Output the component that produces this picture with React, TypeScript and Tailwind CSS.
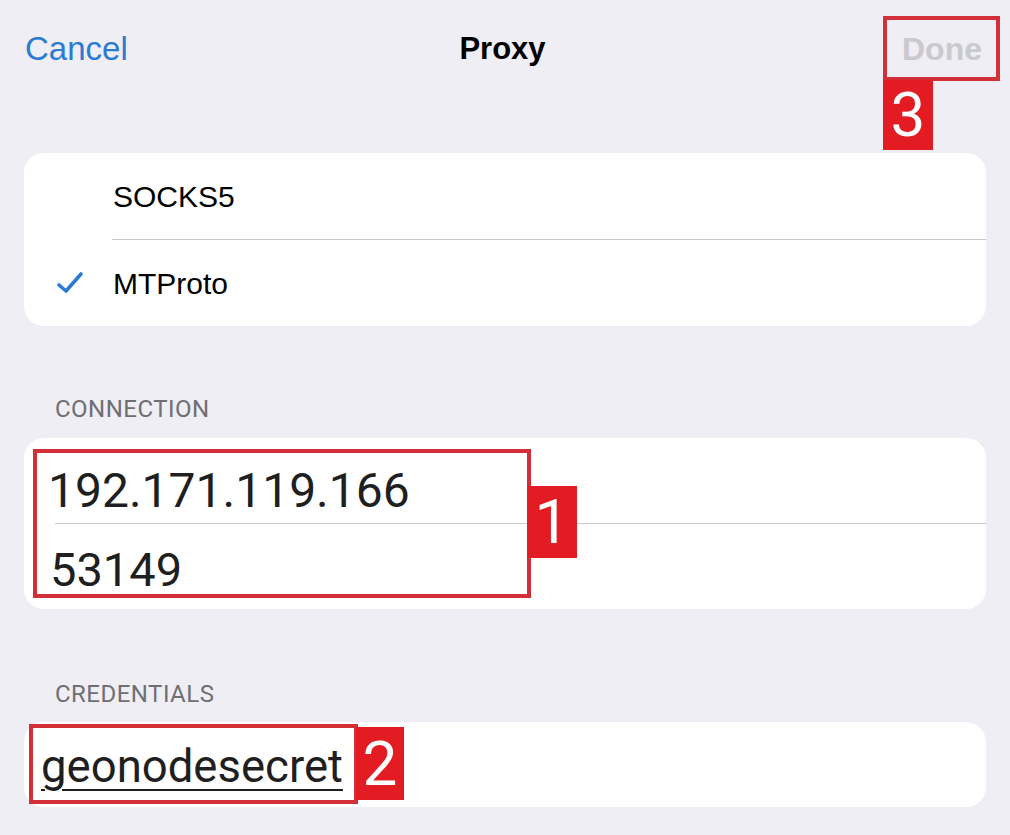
import React from "react";

const Check = () => (
  <svg width="28" height="24" viewBox="0 0 28 24" className="shrink-0">
    <polyline
      points="3,14 10,20 25,3"
      fill="none"
      stroke="#2b7bd4"
      strokeWidth="3.6"
      strokeLinecap="round"
      strokeLinejoin="round"
    />
  </svg>
);

// red callout number tag used by the annotation frames
const Tag = ({ n, className }: { n: string; className: string }) => (
  <div
    className={`absolute flex items-center justify-center bg-[#e31b23] text-white text-[62px] leading-none [font-family:Roboto,'Liberation_Sans',sans-serif] ${className}`}
  >
    {n}
  </div>
);

export default function App() {
  return (
    <div className="relative w-[1010px] h-[835px] overflow-hidden bg-[#efeef4] [font-family:'Liberation_Sans',Arial,sans-serif]">
      {/* nav bar */}
      <div className="grid h-[98px] grid-cols-[1fr_auto_1fr] items-center pl-[25px] pr-[28px]">
        <span className="justify-self-start text-[33px] text-[#2c7bd3]">Cancel</span>
        <span className="mr-[2px] text-[31px] font-bold text-black">Proxy</span>
        <span className="justify-self-end text-[32px] font-bold text-[#c9c9ce]">Done</span>
      </div>

      {/* proxy type */}
      <div className="mx-[24px] mt-[55px] rounded-[20px] bg-white">
        <div className="flex h-[86px] items-center pl-[89px]">
          <span className="text-[30px] text-black">SOCKS5</span>
        </div>
        <div className="ml-[88px] h-px bg-[#c8c7cc]" />
        <div className="flex h-[86px] items-center">
          <div className="flex w-[89px] justify-center pl-[3px]">
            <Check />
          </div>
          <span className="text-[30px] text-black">MTProto</span>
        </div>
      </div>

      <div className="flex h-[112px] items-end px-[55px] pb-[14px]">
        <span className="text-[24px] leading-[30px] tracking-[0.02em] text-[#6e6e73] [font-family:Roboto,sans-serif]">
          CONNECTION
        </span>
      </div>

      {/* server + port */}
      <div className="relative mx-[24px] rounded-[20px] bg-white [font-family:Roboto,sans-serif] text-[#1f1f21]">
        <div className="h-[85px] pl-[24px] pt-[25px]">
          <span className="text-[48px] leading-[56px]">192.171.119.166</span>
        </div>
        <div className="ml-[31px] h-px bg-[#c8c7cc]" />
        <div className="h-[85px] pl-[26px] pt-[18px]">
          <span className="text-[47px] leading-[55px]">53149</span>
        </div>

        <div className="absolute left-[9px] top-[11px] h-[149px] w-[498px] border-4 border-[#d32f38]" />
        <Tag n="1" className="left-[503px] top-[48px] h-[72px] w-[50px]" />
      </div>

      <div className="flex h-[113px] items-end px-[55px] pb-[13px]">
        <span className="text-[24px] leading-[30px] tracking-[0.02em] text-[#6e6e73] [font-family:Roboto,sans-serif]">
          CREDENTIALS
        </span>
      </div>

      {/* secret */}
      <div className="relative mx-[24px] h-[85px] rounded-[20px] bg-white pl-[17px] pt-[18px] [font-family:Roboto,sans-serif] text-[#1f1f21]">
        <span className="text-[45.5px] leading-[53px] underline decoration-2 underline-offset-[7px]">
          geonodesecret
        </span>

        <div className="absolute left-[5px] top-[2px] h-[80px] w-[329px] border-4 border-[#d32f38]" />
        <Tag n="2" className="left-[332px] top-[5px] h-[73px] w-[48px]" />
      </div>

      {/* frame around Done */}
      <div className="absolute left-[883px] top-[16px] h-[65px] w-[117px] border-4 border-[#d32f38]" />
      <Tag n="3" className="left-[883px] top-[80px] h-[70px] w-[50px]" />
    </div>
  );
}
